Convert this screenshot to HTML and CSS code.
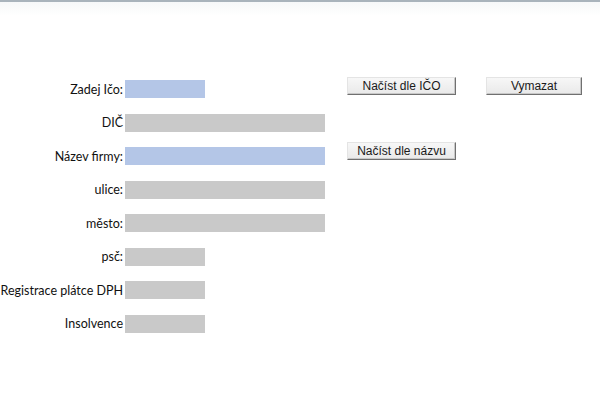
FILE: index.html
```html
<!DOCTYPE html>
<html lang="cs">
<head>
<meta charset="utf-8">
<title>Načíst dle IČO</title>
<link rel="stylesheet" href="styles.css">
</head>
<body>
<div class="topbar"></div>
<div class="sheet">
  <div class="form">
    <span class="label">Zadej Ičo:</span><span class="field blue short"></span>
    <span class="label">DIČ</span><span class="field gray long"></span>
    <span class="label">Název firmy:</span><span class="field blue long"></span>
    <span class="label">ulice:</span><span class="field gray long"></span>
    <span class="label">město:</span><span class="field gray long"></span>
    <span class="label">psč:</span><span class="field gray short"></span>
    <span class="label">Registrace plátce DPH</span><span class="field gray short"></span>
    <span class="label">Insolvence</span><span class="field gray short"></span>
  </div>
  <div class="buttons">
    <button class="btn">Načíst dle IČO</button>
    <button class="btn">Vymazat</button>
    <button class="btn">Načíst dle názvu</button>
  </div>
</div>
</body>
</html>
```

FILE: styles.css
```css
html, body {
  margin: 0;
  padding: 0;
  background: #ffffff;
}
body {
  width: 600px;
  height: 420px;
  overflow: hidden;
  font-family: "Liberation Sans", Arial, sans-serif;
}
.topbar {
  height: 14px;
  border-top: 2px solid #a9b4bc;
  background: linear-gradient(#f6f8f9, #ffffff);
}
.sheet {
  display: flex;
  align-items: flex-start;
  padding-top: 64px;
}
.form {
  display: grid;
  grid-template-columns: 123px 200px;
  grid-auto-rows: 18px;
  row-gap: 15.5px;
  column-gap: 2px;
  align-items: center;
}
.label {
  justify-self: end;
  font-family: Lato, "Liberation Sans", sans-serif;
  font-size: 12.5px;
  color: #111111;
  white-space: nowrap;
}
.field {
  display: block;
  height: 18px;
}
.short { width: 80px; }
.long { width: 200px; }
.blue { background: #b4c6e7; }
.gray { background: #c9c9c9; }
.buttons {
  display: grid;
  grid-template-columns: 109px 96px;
  grid-auto-rows: 18px;
  column-gap: 30px;
  row-gap: 47px;
  margin-left: 22px;
  margin-top: -3px;
}
.btn {
  margin: 0;
  padding: 0;
  height: 18px;
  font-family: "Liberation Sans", Arial, sans-serif;
  font-size: 12px;
  color: #1a1a1a;
  background: linear-gradient(#f7f7f7, #e9e9e9);
  border: 1px solid #e4e4e4;
  border-right-color: #707070;
  border-bottom-color: #707070;
  box-shadow: inset -1px -1px 0 #c8c8c8;
}
```
